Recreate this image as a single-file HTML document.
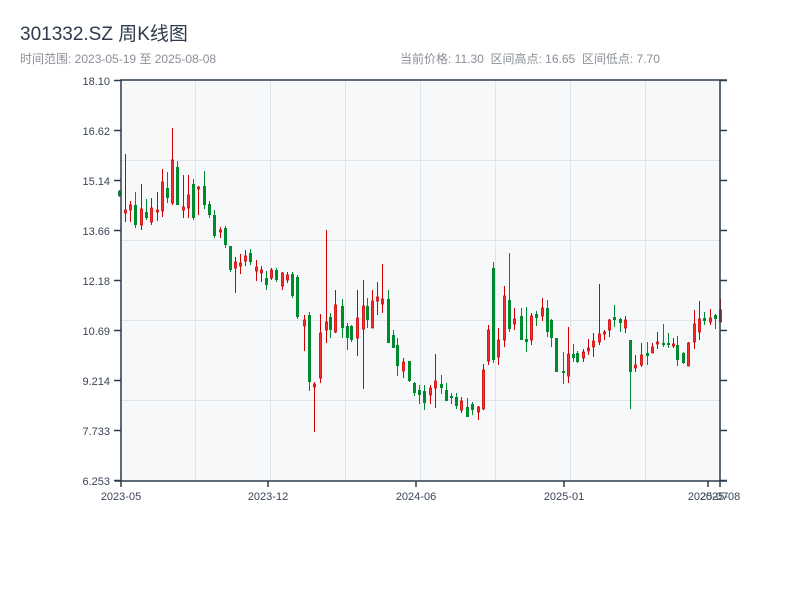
<!DOCTYPE html>
<html><head><meta charset="utf-8"><style>
body{margin:0;background:#fff;width:800px;height:600px;overflow:hidden;font-family:"Liberation Sans","Noto Sans CJK SC",sans-serif}
</style></head><body>
<svg width="800" height="600" xmlns="http://www.w3.org/2000/svg" style="position:absolute;left:0;top:0" font-family="Liberation Sans, Noto Sans CJK SC, sans-serif">
<text x="20" y="40" font-size="19" fill="#2f3b4c">301332.SZ 周K线图</text>
<text x="20" y="63" font-size="12" fill="#8a8f96">时间范围: 2023-05-19 至 2025-08-08</text>
<text x="400" y="63" font-size="12" fill="#8a8f96" style="white-space:pre">当前价格: 11.30  区间高点: 16.65  区间低点: 7.70</text>
<rect x="121" y="80" width="599" height="400" fill="#f6f8fa"/>
<g id="grid" stroke="#e0e3e8" stroke-width="1"></g>
<g id="c"></g>
<g stroke="#2c3a4d" stroke-width="1.5" fill="none">
<line x1="121" y1="80" x2="121" y2="481"/>
<line x1="120" y1="80" x2="727" y2="80"/>
<line x1="720" y1="80" x2="720" y2="481"/>
<line x1="115" y1="481" x2="727" y2="481"/>
</g>
<g id="ax" font-size="11" fill="#3a4556"></g>
</svg>
<script>
var NS="http://www.w3.org/2000/svg";
function el(p,t,a,txt){var e=document.createElementNS(NS,t);for(var k in a)e.setAttribute(k,a[k]);if(txt)e.textContent=txt;document.getElementById(p).appendChild(e);}
[195,270,345,420,495,570,645].forEach(function(x){el('grid','line',{x1:x+.5,y1:80,x2:x+.5,y2:480});});
[160,240,320,400].forEach(function(y){el('grid','line',{x1:121,y1:y+.5,x2:720,y2:y+.5});});
var yt=[["18.10",80],["16.62",130],["15.14",180],["13.66",230],["12.18",280],["10.69",330],["9.214",380],["7.733",430],["6.253",480]];
yt.forEach(function(t){el('ax','text',{x:110,y:t[1]+5,'text-anchor':'end'},t[0]);
el('ax','line',{x1:114,y1:t[1]+.5,x2:121,y2:t[1]+.5,stroke:'#2c3a4d','stroke-width':1.5});
el('ax','line',{x1:720,y1:t[1]+.5,x2:727,y2:t[1]+.5,stroke:'#2c3a4d','stroke-width':1.5});});
[[121,"2023-05"],[268,"2023-12"],[416,"2024-06"],[564,"2025-01"],[708,"2025-07"],[720,"2025-08"]].forEach(function(t){
el('ax','line',{x1:t[0],y1:481,x2:t[0],y2:487,stroke:'#2c3a4d','stroke-width':1.5});
el('ax','text',{x:t[0],y:500,'text-anchor':'middle'},t[1]);});
var d=[
[119,190,197,191,196,'g'],[125,154,222,210,213,'r'],[130,201,222,205,210,'r'],[135,192,228,205,225,'g'],[141,184,230,209,225,'r'],
[146,199,220,212,218,'g'],[151,198,225,208,222,'r'],[157,192,221,210,212,'r'],[162,169,217,182,211,'r'],[167,172,203,188,198,'g'],
[172,128,205,160,203,'r'],[177,161,205,167,205,'g'],[183,175,218,207,210,'r'],[188,175,218,195,208,'r'],[193,179,220,184,218,'g'],
[198,186,215,187,189,'r'],[204,171,209,186,205,'g'],[209,201,218,204,215,'g'],[214,210,238,215,236,'g'],[220,227,238,230,232,'r'],
[225,226,248,228,245,'g'],[230,246,272,246,270,'g'],[235,257,293,262,268,'r'],[240,254,274,263,266,'r'],[245,250,266,256,261,'r'],
[250,249,265,253,262,'g'],[256,260,281,267,271,'r'],[261,266,282,270,273,'r'],[266,271,290,278,285,'g'],[271,268,280,270,278,'r'],
[276,268,282,270,280,'g'],[282,272,290,273,286,'r'],[287,272,283,275,280,'r'],[292,272,298,274,296,'g'],[297,275,319,277,317,'g'],
[304,315,351,320,326,'r'],[309,312,391,315,382,'g'],[314,382,432,384,387,'r'],[320,314,383,333,378,'r'],[326,230,343,322,330,'r'],
[330,313,338,317,330,'g'],[335,290,333,305,332,'r'],[342,299,338,306,328,'g'],[347,323,350,326,338,'g'],[351,325,342,326,340,'g'],
[357,290,356,318,338,'r'],[363,280,389,306,329,'r'],[367,298,328,306,320,'g'],[372,290,327,301,328,'r'],[377,282,315,297,301,'r'],
[382,264,313,299,304,'r'],[388,290,343,299,343,'g'],[393,330,348,335,348,'g'],[397,338,376,345,366,'g'],[403,358,378,362,371,'r'],
[409,361,382,361,381,'g'],[414,382,396,383,393,'g'],[419,385,404,390,395,'g'],[424,385,410,391,403,'g'],[430,385,404,388,395,'r'],
[435,354,408,381,388,'r'],[441,375,394,384,388,'g'],[446,383,401,390,401,'g'],[451,393,404,396,398,'g'],[456,393,409,397,406,'g'],
[461,397,413,401,410,'r'],[467,398,417,407,417,'g'],[472,402,415,404,410,'g'],[478,406,420,407,412,'r'],[483,364,410,370,409,'r'],
[488,325,365,330,361,'r'],[493,262,363,268,360,'g'],[498,328,365,340,357,'r'],[504,286,347,296,340,'r'],[509,253,332,300,329,'g'],
[514,308,330,319,324,'r'],[521,308,340,316,340,'g'],[526,307,352,339,342,'g'],[531,313,345,316,340,'r'],[536,311,326,314,318,'g'],
[542,298,321,308,316,'r'],[547,300,337,308,332,'g'],[551,319,347,320,338,'g'],[556,338,372,338,372,'g'],[563,352,384,371,373,'g'],
[568,327,383,354,376,'r'],[573,344,362,354,358,'g'],[577,351,363,353,362,'g'],[583,349,362,352,358,'r'],[588,339,355,348,351,'r'],
[593,333,357,341,347,'r'],[599,284,345,334,342,'r'],[604,330,340,332,334,'r'],[609,319,337,320,330,'r'],[614,305,327,317,320,'g'],
[620,318,332,319,323,'g'],[625,316,333,320,328,'r'],[630,340,409,340,372,'g'],[635,355,372,365,368,'r'],[641,343,367,355,365,'r'],
[647,342,365,353,356,'g'],[652,343,353,347,353,'r'],[657,332,349,342,344,'r'],[663,324,347,343,345,'g'],[668,333,348,343,345,'g'],
[673,338,348,344,346,'r'],[677,336,366,345,360,'g'],[683,352,364,353,363,'g'],[688,342,366,343,366,'r'],[694,310,349,324,342,'r'],
[699,301,340,319,332,'r'],[704,312,325,318,321,'g'],[710,309,325,318,322,'r'],[715,314,329,315,319,'g'],[720,299,322,310,322,'r']];
d.forEach(function(c){var col=c[5]=='r'?'#d00000':'#008a2e';
el('c','rect',{x:c[0],y:c[1],width:1,height:c[2]-c[1],fill:col});
var h=Math.max(c[4]-c[3],1.5);
if(c[5]=='r')el('c','rect',{x:c[0]-0.5,y:c[3],width:2,height:h,fill:'#f23030',stroke:col,'stroke-width':0.8});
else el('c','rect',{x:c[0]-1,y:c[3],width:3,height:h,fill:col});});
</script>
</body></html>
